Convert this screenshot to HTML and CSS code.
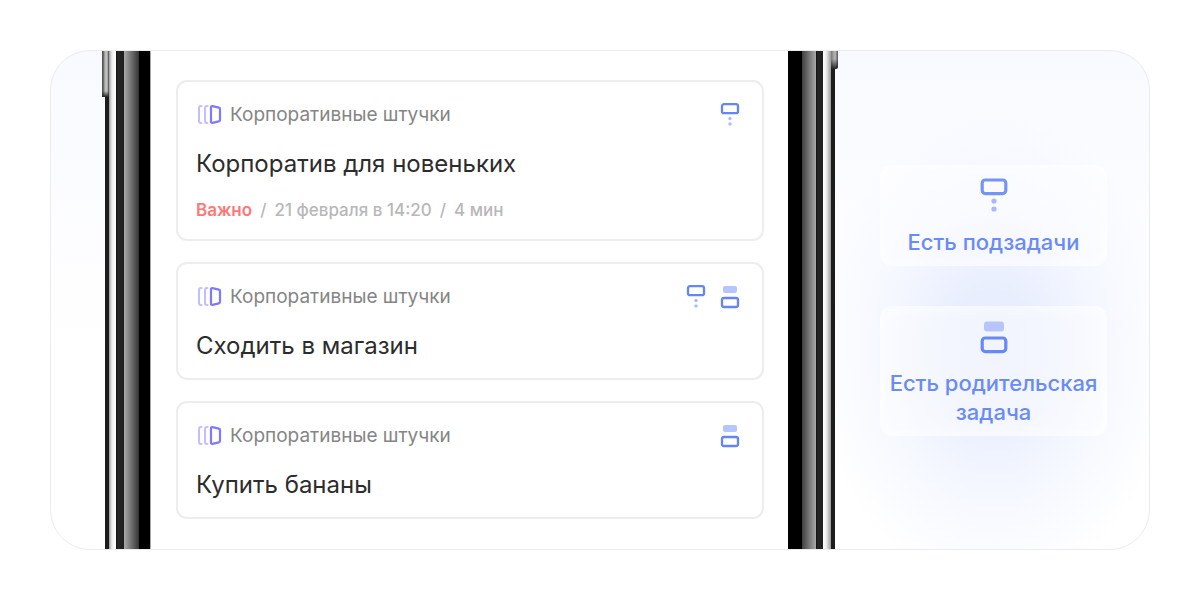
FILE: index.html
```html
<!DOCTYPE html>
<html lang="ru">
<head>
<meta charset="utf-8">
<title>Задачи</title>
<link rel="stylesheet" href="styles.css">
</head>
<body>
<svg class="defs" aria-hidden="true">
  <defs>
    <symbol id="project" viewBox="0 0 26 22">
      <g fill="none" stroke-width="2" stroke-linecap="round" stroke-linejoin="round">
        <path d="M5.500 2H5Q3 2 3 4V17Q3 19 5 19H5.500M11.500 2H11Q9 2 9 4V17Q9 19 11 19H11.500" stroke="#c2bfff"/>
        <path d="M15 3.300Q15 1.800 16.500 2.100L22.800 3.600Q24 3.900 24 5V16Q24 17.100 22.800 17.400L16.500 18.900Q15 19.200 15 17.700Z" stroke="#7f79ff" stroke-width="2.200"/>
      </g>
    </symbol>
    <symbol id="children" viewBox="0 0 20 24">
      <rect x="2" y="1.200" width="16" height="9" rx="2" fill="none" stroke="#6385f8" stroke-width="2.300"/>
      <circle cx="10" cy="15.500" r="1.700" fill="#abbcfb"/>
      <circle cx="10" cy="21" r="1.700" fill="#abbcfb"/>
    </symbol>
    <symbol id="parent" viewBox="0 0 20 24">
      <rect x="3" y="1" width="14" height="7" rx="2" fill="#b6c5fb"/>
      <rect x="2" y="13" width="16" height="9" rx="2" fill="none" stroke="#6385f8" stroke-width="2.300"/>
    </symbol>
    <symbol id="children-large" viewBox="0 0 28 36">
      <rect x="2.200" y="3" width="23.600" height="13.600" rx="3" fill="none" stroke="#7594f8" stroke-width="3.200"/>
      <circle cx="14" cy="24" r="2.600" fill="#a6b9fb"/>
      <circle cx="14" cy="32" r="2.600" fill="#a6b9fb"/>
    </symbol>
    <symbol id="parent-large" viewBox="0 0 28 36">
      <rect x="4" y="3.500" width="20" height="10" rx="3" fill="#b6c5fb"/>
      <rect x="2.200" y="20" width="23.600" height="13.600" rx="3" fill="none" stroke="#6888f6" stroke-width="3.200"/>
    </symbol>
  </defs>
</svg>
<main class="stage">
  <section class="phone">
    <div class="bezel bezel-left"><span class="key key-left"></span></div>
    <div class="screen">
      <article class="task">
        <header class="task-head">
          <svg class="project-icon" aria-hidden="true"><use href="#project"/></svg>
          <span class="project">Корпоративные штучки</span>
          <svg class="relation" role="img" aria-label="Есть подзадачи"><use href="#children"/></svg>
        </header>
        <h2 class="title">Корпоратив для новеньких</h2>
        <p class="meta"><strong class="important">Важно</strong><span>/</span><span>21 февраля в 14:20</span><span>/</span><span>4 мин</span></p>
      </article>
      <article class="task">
        <header class="task-head">
          <svg class="project-icon" aria-hidden="true"><use href="#project"/></svg>
          <span class="project">Корпоративные штучки</span>
          <svg class="relation" role="img" aria-label="Есть подзадачи"><use href="#children"/></svg>
          <svg class="relation" role="img" aria-label="Есть родительская задача"><use href="#parent"/></svg>
        </header>
        <h2 class="title">Сходить в магазин</h2>
      </article>
      <article class="task">
        <header class="task-head">
          <svg class="project-icon" aria-hidden="true"><use href="#project"/></svg>
          <span class="project">Корпоративные штучки</span>
          <svg class="relation" role="img" aria-label="Есть родительская задача"><use href="#parent"/></svg>
        </header>
        <h2 class="title">Купить бананы</h2>
      </article>
    </div>
    <div class="bezel bezel-right"><span class="key key-right"></span></div>
  </section>
  <aside class="legend">
    <div class="hint">
      <svg class="hint-icon" aria-hidden="true"><use href="#children-large"/></svg>
      <p class="hint-text">Есть подзадачи</p>
    </div>
    <div class="hint">
      <svg class="hint-icon" aria-hidden="true"><use href="#parent-large"/></svg>
      <p class="hint-text">Есть родительская задача</p>
    </div>
  </aside>
</main>
</body>
</html>
```
FILE: styles.css
```css
* { box-sizing: border-box; }
body {
  display: flex;
  min-height: 100vh;
  margin: 0;
  padding: 50px;
  background: #fff;
  font-family: Inter, "Noto Sans", sans-serif;
}
h2, p { margin: 0; }
.defs { position: absolute; width: 0; height: 0; }
.stage {
  flex: 1;
  display: flex;
  padding-left: 54px;
  overflow: hidden;
  border: 1px solid #ececee;
  border-radius: 40px;
  background: linear-gradient(#f9faff, #fafbff 15%, #fff 60%);
}
.phone { flex: 1; display: flex; }
.bezel { position: relative; flex: none; }
.bezel-left {
  width: 46px;
  background: linear-gradient(90deg, #1c1c1c 4px, #999 4px, #eee 7px, #fff 11px, #111 11px, #262626 13px, #1c1c1c 19px, #aaa 19px, #333 34px, #000 34px, #000 45px, #aaa 45px);
}
.bezel-right {
  width: 47px;
  background: linear-gradient(90deg, #000 14px, #404040 14px, #aaa 28px, #111 28px, #262626 30px, #1c1c1c 35px, #fff 35px, #eee 38px, #999 43px, #1c1c1c 43px);
}
.key { position: absolute; top: 0; }
.key-left {
  left: -3px;
  width: 7px;
  height: 46px;
  background: linear-gradient(transparent 40px, #222 46px), linear-gradient(90deg, #555 1px, #b4b7b5 3px, #c4c7c5 5px, #444 7px);
}
.key-right {
  right: -3px;
  width: 7px;
  height: 18px;
  border-radius: 0 0 2px 0;
  background: linear-gradient(transparent 8px, #222 18px), linear-gradient(90deg, #777, #bbb 4px, #555 7px);
}
.screen {
  flex: 1;
  display: flex;
  flex-direction: column;
  gap: 21px;
  padding: 29px 24px 29px 25px;
  background: #fff;
}
.task {
  padding: 20px 22px 17px 18px;
  border: 2px solid #ededed;
  border-radius: 11px;
}
.task-head { display: flex; align-items: center; gap: 14px; height: 26px; }
.project-icon { width: 26px; height: 22px; }
.project {
  flex: 1;
  margin-left: -6px;
  color: #858585;
  font-size: 19px;
  line-height: 26px;
}
.relation { width: 20px; height: 24px; }
.title {
  margin-top: 21px;
  color: #2c2c2c;
  font-size: 24px;
  font-weight: 400;
  line-height: 30px;
}
.meta {
  display: flex;
  gap: 8px;
  margin-top: 20px;
  color: #b8b8b8;
  font-size: 17px;
  font-weight: 500;
  line-height: 23px;
}
.important { color: #ff7878; font-weight: 600; }
.legend {
  flex: none;
  display: flex;
  flex-direction: column;
  justify-content: center;
  gap: 40px;
  width: 314px;
  padding: 0 42px 0 45px;
  background:
    radial-gradient(ellipse 180px 240px at 158px 300px, #e6ecfe, #e9eefe 25%, rgb(240 244 255 / 65%) 60%, rgb(250 251 255 / 0) 100%);
}
.hint {
  display: flex;
  flex-direction: column;
  align-items: center;
  gap: 15px;
  padding: 12px 8px 9px;
  border-radius: 12px;
  background: rgb(255 255 255 / 45%);
  box-shadow: inset 0 0 20px rgb(255 255 255 / 70%);
}
.hint-icon { width: 28px; height: 36px; }
.hint-text {
  color: #6a8af7;
  font-size: 22px;
  font-weight: 500;
  line-height: 29px;
  text-align: center;
}
```
